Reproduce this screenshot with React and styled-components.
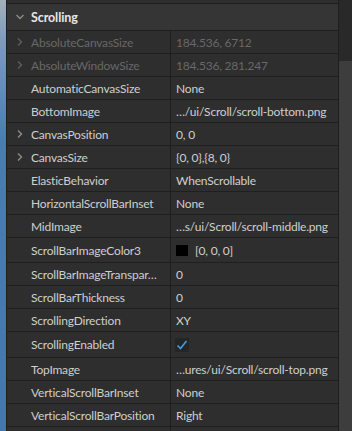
import React from "react";
import styled, { createGlobalStyle } from "styled-components";

const Global = createGlobalStyle`
    html, body {
        margin: 0;
        padding: 0;
        background: #2e2e2e;
    }
    body {
        font-family: Lato, "Open Sans", sans-serif;
        -webkit-font-smoothing: antialiased;
    }
`;

const Frame = styled.div`
    display: flex;
    width: 352px;
    height: 431px;
    overflow: hidden;
`;

const Strip = styled.div`
    width: 6px;
    flex-shrink: 0;
    background: linear-gradient(#a3b0bd 0px, #7f9bbb 40px, #4b7bb3 140px, #4576b0 100%);
    border-right: 1px solid #1e1e1e;
`;

const Panel = styled.div`
    flex: 1;
    display: flex;
    flex-direction: column;
    border-right: 1px solid #1e1e1e;
`;

const Sliver = styled.div`
    height: 3px;
    flex-shrink: 0;
    background: #2e2e2e;
    border-bottom: 1px solid #1f1f1f;
`;

const Header = styled.div`
    height: 26px;
    flex-shrink: 0;
    display: flex;
    align-items: center;
    background: #353535;
    border-bottom: 1px solid #1f1f1f;
    color: #e6e6e6;
    font-weight: 700;
    font-size: 12.5px;
    letter-spacing: -0.1px;
`;

const Toggle = styled.span`
    width: 24px;
    flex-shrink: 0;
    display: flex;
    align-items: center;
    justify-content: center;
    padding-left: 1px;
    box-sizing: border-box;
`;

const Row = styled.div`
    height: ${p => p.h || 22}px;
    flex-shrink: 0;
    display: grid;
    grid-template-columns: 164px 1fr;
    border-bottom: 1px solid #1f1f1f;
    font-size: 12px;
    letter-spacing: -0.2px;
    color: ${p => (p.disabled ? "#686868" : "#cfcfcf")};
`;

const Name = styled.div`
    display: flex;
    align-items: center;
    border-right: 1px solid #1f1f1f;
    white-space: nowrap;
    overflow: hidden;
`;

const Value = styled.div`
    display: flex;
    align-items: center;
    gap: 7px;
    padding-left: 5px;
    white-space: nowrap;
    overflow: hidden;
`;

const Swatch = styled.span`
    width: 12px;
    height: 11px;
    background: #000;
`;

const Check = styled.span`
    width: 14px;
    height: 14px;
    margin-left: -1px;
    background: #252525;
    display: flex;
    align-items: center;
    justify-content: center;
`;

const Scrollbar = styled.div`
    width: 13px;
    flex-shrink: 0;
    display: flex;
    flex-direction: column;
    background: #292929;
`;

const Thumb = styled.div`
    margin-top: 61px;
    flex: 1;
    background: #3d3d3d;
`;

const Chevron = ({ down, color }) => (
    <svg width="10" height="10" viewBox="0 0 10 10">
        <polyline
            points={down ? "1.5,3 5,6.5 8.5,3" : "3,1.5 6.5,5 3,8.5"}
            fill="none"
            stroke={color}
            strokeWidth="1.4"
        />
    </svg>
);

const rows = [
    { name: "AbsoluteCanvasSize", value: "184.536, 6712", arrow: true, disabled: true },
    { name: "AbsoluteWindowSize", value: "184.536, 281.247", arrow: true, disabled: true },
    { name: "AutomaticCanvasSize", value: "None" },
    { name: "BottomImage", value: "…/ui/Scroll/scroll-bottom.png" },
    { name: "CanvasPosition", value: "0, 0", arrow: true },
    { name: "CanvasSize", value: "{0, 0},{8, 0}", arrow: true },
    { name: "ElasticBehavior", value: "WhenScrollable" },
    { name: "HorizontalScrollBarInset", value: "None" },
    { name: "MidImage", value: "…s/ui/Scroll/scroll-middle.png" },
    { name: "ScrollBarImageColor3", value: "[0, 0, 0]", swatch: true, h: 24 },
    { name: "ScrollBarImageTranspar…", value: "0" },
    { name: "ScrollBarThickness", value: "0" },
    { name: "ScrollingDirection", value: "XY" },
    { name: "ScrollingEnabled", check: true, h: 25 },
    { name: "TopImage", value: "…ures/ui/Scroll/scroll-top.png" },
    { name: "VerticalScrollBarInset", value: "None" },
    { name: "VerticalScrollBarPosition", value: "Right" },
    { name: "", value: "" },
];

export default function App() {
    return (
        <>
            <Global />
            <Frame>
                <Strip />
                <Panel>
                    <Sliver />
                    <Header>
                        <Toggle>
                            <Chevron down color="#8c8c8c" />
                        </Toggle>
                        Scrolling
                    </Header>
                    {rows.map((r, i) => (
                        <Row key={i} h={r.h} disabled={r.disabled}>
                            <Name>
                                <Toggle>
                                    {r.arrow && <Chevron color={r.disabled ? "#5e5e5e" : "#8c8c8c"} />}
                                </Toggle>
                                {r.name}
                            </Name>
                            <Value>
                                {r.swatch && <Swatch />}
                                {r.check && (
                                    <Check>
                                        <svg width="12" height="12" viewBox="0 0 12 12">
                                            <polyline points="1.5,6.5 4.5,9.5 10.5,2" fill="none" stroke="#3aa0ec" strokeWidth="1.6" />
                                        </svg>
                                    </Check>
                                )}
                                {r.value}
                            </Value>
                        </Row>
                    ))}
                </Panel>
                <Scrollbar>
                    <Thumb />
                </Scrollbar>
            </Frame>
        </>
    );
}
